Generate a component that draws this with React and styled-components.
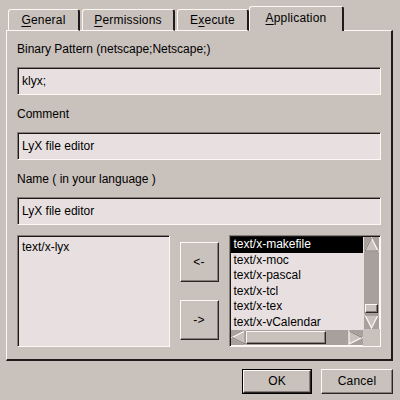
import React from "react";
import styled, { createGlobalStyle, css } from "styled-components";

const GlobalStyle = createGlobalStyle`
  html, body {
    margin: 0;
    padding: 0;
    background: #c9c1bc;
  }
  * {
    box-sizing: border-box;
  }
`;

const raised = css`
  border-style: solid;
  border-width: 1px;
  border-color: #fdf8f3 #2a2624 #2a2624 #fdf8f3;
  box-shadow: inset -1px -1px 0 #857e7a;
`;

const sunken = css`
  border-style: solid;
  border-width: 1px;
  border-color: #857e7a #fdf8f3 #fdf8f3 #857e7a;
  box-shadow: inset 1px 1px 0 #1a1716;
`;

const Dialog = styled.div`
  width: 400px;
  height: 400px;
  padding: 6px 7px 0 6px;
  background: #c9c1bc;
  font-family: "Liberation Sans", Arial, sans-serif;
  font-size: 12px;
  color: #000;
  display: flex;
  flex-direction: column;
`;

const TabBar = styled.div`
  display: flex;
  align-items: flex-end;
  height: 25px;
  padding-left: 2px;
  position: relative;
  z-index: 1;
  margin-bottom: -1px;
`;

const Tab = styled.div`
  width: ${(p) => p.$w}px;
  height: ${(p) => (p.$active ? 25 : 22)}px;
  margin-right: ${(p) => p.$gap || 0}px;
  display: flex;
  align-items: center;
  justify-content: center;
  padding-bottom: ${(p) => (p.$active ? 2 : 0)}px;
  background: #c9c1bc;
  border-top: 1px solid #fdf8f3;
  border-left: 1px solid #fdf8f3;
  border-right: 2px solid #1e1b1a;
  border-radius: 3px 3px 0 0;
  border-bottom: ${(p) => (p.$active ? "none" : "1px solid #fdf8f3")};
  letter-spacing: 0.2px;
  white-space: nowrap;
  u {
    text-decoration: underline;
    text-underline-offset: 2px;
  }
`;

const Panel = styled.div`
  width: 387px;
  height: 331px;
  border-top: 1px solid #fdf8f3;
  border-left: 1px solid #fdf8f3;
  border-right: 2px solid #1e1b1a;
  border-bottom: 2px solid #1e1b1a;
  padding: 9px 10px 0 10px;
  display: flex;
  flex-direction: column;
`;

const Label = styled.div`
  height: 18px;
  line-height: 18px;
  white-space: nowrap;
  margin-bottom: 9px;
`;

const Field = styled.div`
  ${sunken}
  height: 28px;
  background: #e8e0e0;
  padding-left: 4px;
  line-height: 26px;
  margin-bottom: 10px;
`;

const ListRow = styled.div`
  display: flex;
  gap: 10px;
  height: 112px;
`;

const ListBox = styled.div`
  ${sunken}
  width: 153px;
  background: #e8e0e0;
  padding: 4px 0 0 4px;
`;

const ArrowColumn = styled.div`
  display: flex;
  flex-direction: column;
  justify-content: center;
  gap: 18px;
`;

const PushButton = styled.div`
  ${raised}
  width: ${(p) => p.$w}px;
  height: ${(p) => p.$h}px;
  display: flex;
  align-items: center;
  justify-content: center;
  background: #c9c1bc;
  letter-spacing: 0.2px;
  white-space: nowrap;
`;

const DefaultFrame = styled.div`
  border: 1px solid #000;
  display: flex;
`;

const ScrollList = styled.div`
  ${sunken}
  width: 153px;
  display: grid;
  grid-template-columns: 1fr 17px;
  grid-template-rows: 1fr 17px;
  background: #c9c1bc;
  padding: 1px 0 0 1px;
`;

const Items = styled.div`
  background: #e8e0e0;
  overflow: hidden;
`;

const Item = styled.div`
  height: 15.5px;
  line-height: 15.5px;
  padding-left: 3px;
  white-space: nowrap;
  background: ${(p) => (p.$selected ? "#000" : "transparent")};
  color: ${(p) => (p.$selected ? "#fff" : "#000")};
`;

const VScroll = styled.div`
  background: #a8a09c;
  border-left: 1px solid #e8e0e0;
  border-right: 1px solid #fdf8f3;
  display: flex;
  flex-direction: column;
  justify-content: space-between;
  align-items: center;
`;

const HScroll = styled.div`
  background: #a8a09c;
  border-top: 1px solid #e8e0e0;
  border-bottom: 1px solid #fdf8f3;
  display: flex;
  align-items: center;
`;

const Corner = styled.div`
  background: #c9c1bc;
`;

const VThumbGroup = styled.div`
  display: flex;
  flex-direction: column;
  align-items: center;
`;

const VThumb = styled.div`
  ${raised}
  width: 13px;
  height: 9px;
  background: #c9c1bc;
  margin-bottom: 1px;
`;

const HThumb = styled.div`
  ${raised}
  height: 13px;
  width: 80px;
  background: #c9c1bc;
`;

const HSpacer = styled.div`
  flex: 1;
`;

const Footer = styled.div`
  display: flex;
  justify-content: flex-end;
  align-items: center;
  gap: 9px;
  height: 39px;
  padding-top: 1px;
`;

function Arrow({ dir }) {
  const pts = {
    up: "7.5,1 14,14 1,14",
    down: "1,1 14,1 7.5,14",
    left: "1,7.5 14,1 14,14",
    right: "14,7.5 1,1 1,14",
  }[dir];
  return (
    <svg width="15" height="15" viewBox="0 0 15 15">
      <polygon points={pts} fill="#c9c1bc" stroke="#fdf8f3" strokeWidth="1.2" />
      <polygon
        points={pts}
        fill="none"
        stroke="#6e6864"
        strokeWidth="1"
        strokeDasharray={dir === "up" || dir === "left" ? "0 14 40" : "14 40"}
      />
    </svg>
  );
}

const mimeTypes = [
  "text/x-makefile",
  "text/x-moc",
  "text/x-pascal",
  "text/x-tcl",
  "text/x-tex",
  "text/x-vCalendar",
];

export default function App() {
  return (
    <>
      <GlobalStyle />
      <Dialog>
        <TabBar>
          <Tab $w={72} $gap={2}>
            <span>
              <u>G</u>eneral
            </span>
          </Tab>
          <Tab $w={93} $gap={2}>
            <span>
              <u>P</u>ermissions
            </span>
          </Tab>
          <Tab $w={72}>
            <span>
              E<u>x</u>ecute
            </span>
          </Tab>
          <Tab $w={95} $active>
            <span>
              <u>A</u>pplication
            </span>
          </Tab>
        </TabBar>
        <Panel>
          <Label>Binary Pattern (netscape;Netscape;)</Label>
          <Field>klyx;</Field>
          <Label>Comment</Label>
          <Field>LyX file editor</Field>
          <Label>Name ( in your language )</Label>
          <Field>LyX file editor</Field>
          <ListRow>
            <ListBox>text/x-lyx</ListBox>
            <ArrowColumn>
              <PushButton $w={39} $h={40}>&lt;-</PushButton>
              <PushButton $w={39} $h={40}>-&gt;</PushButton>
            </ArrowColumn>
            <ScrollList>
              <Items>
                {mimeTypes.map((m, i) => (
                  <Item key={m} $selected={i === 0}>
                    {m}
                  </Item>
                ))}
              </Items>
              <VScroll>
                <Arrow dir="up" />
                <VThumbGroup>
                  <VThumb />
                  <Arrow dir="down" />
                </VThumbGroup>
              </VScroll>
              <HScroll>
                <Arrow dir="left" />
                <HThumb />
                <HSpacer />
                <Arrow dir="right" />
              </HScroll>
              <Corner />
            </ScrollList>
          </ListRow>
        </Panel>
        <Footer>
          <DefaultFrame>
            <PushButton $w={68} $h={23}>OK</PushButton>
          </DefaultFrame>
          <PushButton $w={72} $h={25}>Cancel</PushButton>
        </Footer>
      </Dialog>
    </>
  );
}
